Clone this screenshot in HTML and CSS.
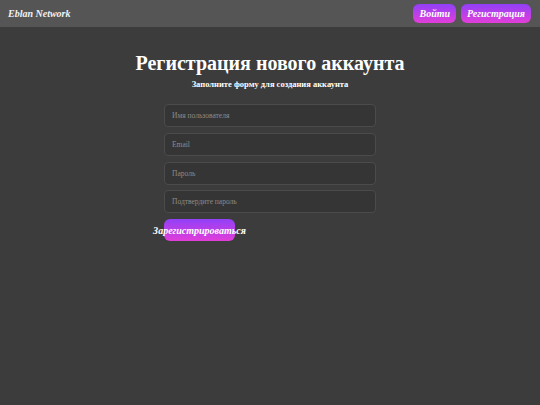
FILE: index.html
```html
<!DOCTYPE html>
<html lang="ru">
<head>
<meta charset="utf-8">
<title>Регистрация</title>
<link rel="stylesheet" href="styles.css">
</head>
<body>
<header class="topbar">
  <span class="brand">Eblan Network</span>
  <nav class="nav">
    <a class="btn" href="#">Войти</a>
    <a class="btn" href="#">Регистрация</a>
  </nav>
</header>
<main class="main">
  <h1 class="title">Регистрация нового аккаунта</h1>
  <p class="subtitle">Заполните форму для создания аккаунта</p>
  <form class="form">
    <input class="field" type="text" placeholder="Имя пользователя">
    <input class="field" type="email" placeholder="Email">
    <input class="field" type="password" placeholder="Пароль">
    <input class="field" type="password" placeholder="Подтвердите пароль">
    <div class="actions">
      <button class="submit" type="button">Зарегистрироваться</button>
    </div>
  </form>
</main>
</body>
</html>
```

FILE: styles.css
```css
* { box-sizing: border-box; }
html, body { margin: 0; padding: 0; }
body {
  background: #3c3c3c;
  color: #fff;
  font-family: "Liberation Serif", "Times New Roman", serif;
  min-height: 405px;
}
.topbar {
  height: 27px;
  background: #555555;
  display: flex;
  align-items: center;
  justify-content: space-between;
  padding: 0 9px 0 8px;
}
.brand {
  font-weight: bold;
  font-style: italic;
  font-size: 10px;
  color: #f2f2f2;
}
.nav { display: flex; gap: 5px; }
.btn {
  display: flex;
  align-items: center;
  height: 19px;
  padding: 0 6px;
  border-radius: 6px;
  background: linear-gradient(#9140f7, #e23ed9);
  color: #fff;
  text-decoration: none;
  font-weight: bold;
  font-style: italic;
  font-size: 10px;
}
.main {
  display: flex;
  flex-direction: column;
  align-items: center;
  padding-top: 25px;
}
.title {
  margin: 0;
  font-size: 20px;
  font-weight: bold;
  line-height: 23px;
}
.subtitle {
  margin: 4px 0 0;
  font-size: 8.5px;
  font-weight: bold;
  line-height: 11px;
}
.form {
  width: 212px;
  margin-top: 14px;
  display: flex;
  flex-direction: column;
  gap: 5.75px;
}
.field {
  height: 23px;
  background: #353535;
  border: 1px solid #4b4b4b;
  border-radius: 4px;
  padding: 0 7px;
  color: #ddd;
  font-family: "Liberation Serif", "Times New Roman", serif;
  font-size: 7.5px;
  outline: none;
}
.field::placeholder { color: #8c8c8c; }
.actions { display: flex; }
.submit {
  width: 71px;
  height: 22px;
  border: none;
  border-radius: 6px;
  background: linear-gradient(#9140f7, #e23ed9);
  color: #fff;
  font-family: "Liberation Serif", "Times New Roman", serif;
  font-weight: bold;
  font-style: italic;
  font-size: 10px;
  padding: 0;
  white-space: nowrap;
  display: flex;
  justify-content: center;
  align-items: center;
  overflow: visible;
}
```
